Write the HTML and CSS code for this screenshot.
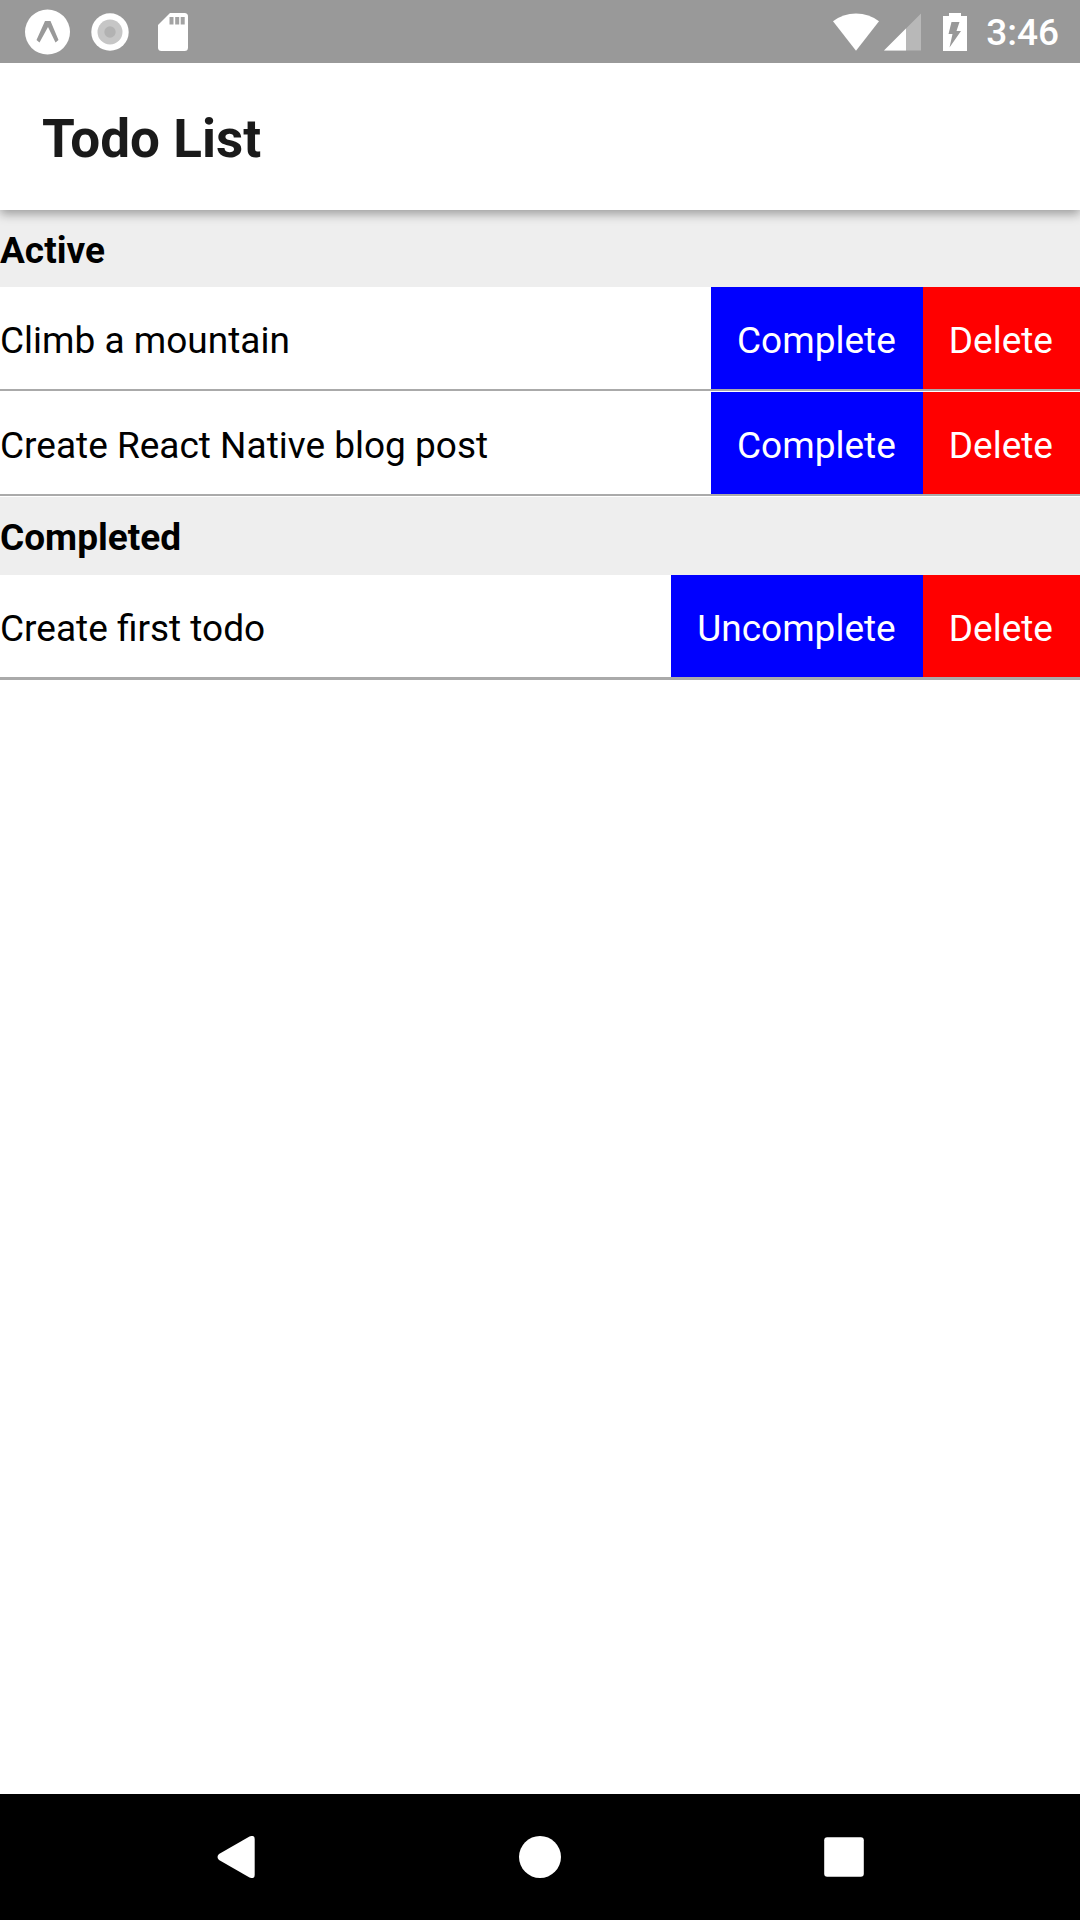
FILE: index.html
```html
<!DOCTYPE html>
<html lang="en">
<head>
<meta charset="utf-8">
<meta name="viewport" content="width=device-width, initial-scale=1">
<title>Todo List</title>
<link rel="stylesheet" href="styles.css">
</head>
<body>
<div class="status-bar">
  <div class="status-left">
    <svg width="46" height="46" viewBox="0 0 46 46" aria-hidden="true">
      <circle cx="22.500" cy="23" r="22.500" fill="#fff"/>
      <path d="M20 12H25.500L33.500 31L30.500 33.500L23 18L14.500 33.500L11.500 31Z" fill="#999"/>
    </svg>
    <svg width="38" height="38" viewBox="0 0 38 38" aria-hidden="true">
      <circle cx="19" cy="19" r="18.700" fill="#fff"/>
      <circle cx="19" cy="19" r="12.500" fill="#c6c6c6"/>
      <circle cx="19" cy="19" r="5.700" fill="#b2b2b2"/>
    </svg>
    <svg width="30" height="38" viewBox="0 0 30 38" aria-hidden="true">
      <path fill="#fff" d="M12 0H26.500Q30 0 30 3.500V34.500Q30 38 26.500 38H3.500Q0 38 0 34.500V12Z"/>
      <path fill="#a3a3a3" d="M11.500 4h4v7.500h-4zM17.200 4h4v7.500h-4zM22.700 4h4v7.500h-4z"/>
    </svg>
  </div>
  <div class="status-right">
    <svg width="46" height="38" viewBox="0 0 46 38" aria-hidden="true">
      <path fill="#fff" d="M0 8.300Q10 .5 23 .5T46 8.300L23 37.700Z"/>
    </svg>
    <svg width="37" height="38" viewBox="0 0 37 38" aria-hidden="true">
      <path fill="#b8b8b8" d="M37 .5V37.500H0Z"/>
      <path fill="#fff" d="M22 15.500V37.500H0Z"/>
    </svg>
    <svg class="battery" width="24" height="38" viewBox="0 0 24 38" aria-hidden="true">
      <path fill="#fff" d="M6 0H18V3H24V38H0V3H6Z"/>
      <path fill="#999" d="M8.500 9H16.500L13.500 18H18L6.500 34.500L9.500 21H5.500Z"/>
    </svg>
    <time>3:46</time>
  </div>
</div>
<header class="app-header"><h1>Todo List</h1></header>
<main>
  <section class="group">
    <h2>Active</h2>
    <ul>
      <li><span class="task">Climb a mountain</span><button class="toggle" type="button">Complete</button><button class="delete" type="button">Delete</button></li>
      <li><span class="task">Create React Native blog post</span><button class="toggle" type="button">Complete</button><button class="delete" type="button">Delete</button></li>
    </ul>
  </section>
  <section class="group">
    <h2>Completed</h2>
    <ul>
      <li><span class="task">Create first todo</span><button class="toggle" type="button">Uncomplete</button><button class="delete" type="button">Delete</button></li>
    </ul>
  </section>
</main>
<nav class="nav-bar">
  <button type="button" aria-label="Back">
    <svg width="42" height="42" viewBox="0 0 42 42"><path fill="#fff" d="M34.500 .5Q39.700 -1.500 39.700 3V39Q39.700 43.500 34.500 41.500L4 24Q1 21 4 18Z"/></svg>
  </button>
  <button type="button" aria-label="Home">
    <svg width="42" height="42" viewBox="0 0 42 42"><circle cx="21" cy="21" r="21" fill="#fff"/></svg>
  </button>
  <button type="button" aria-label="Recent apps">
    <svg width="42" height="42" viewBox="0 0 42 42"><rect x="1.200" y="1.200" width="39.600" height="39.600" rx="3" fill="#fff"/></svg>
  </button>
</nav>
</body>
</html>
```
FILE: styles.css
```css
* {
  box-sizing: border-box;
}

body {
  display: flex;
  flex-direction: column;
  min-height: 100vh;
  margin: 0;
  background: #fff;
  color: #000;
  font-family: Roboto, sans-serif;
  font-size: 37px;
  line-height: 50px;
}

h1,
h2,
ul {
  margin: 0;
  padding: 0;
}

svg {
  display: block;
  flex: none;
}

button {
  border: 0;
  color: #fff;
  font: inherit;
}

.status-bar {
  display: flex;
  align-items: center;
  justify-content: space-between;
  height: 63px;
  padding: 0 21px 0 25px;
  background: #999;
  color: #fff;
}

.status-left,
.status-right {
  display: flex;
  align-items: center;
}

.status-left {
  gap: 20px;
}

.status-left svg:last-child {
  margin-left: 9px;
}

.status-right {
  gap: 5px;
}

.battery {
  margin: 0 14px 0 17px;
}

.status-right time {
  padding-top: 3px;
  font-weight: 500;
}

.app-header {
  z-index: 1;
  padding: 45px 42px 39px;
  background: #fff;
  box-shadow: 0 4px 10px rgba(0, 0, 0, 0.35);
  clip-path: inset(0 0 -20px 0);
}

h1 {
  color: #1a1a1a;
  font-size: 53px;
  line-height: 63px;
}

h2 {
  padding: 15px 0 11px;
  background: #eee;
  font-size: 37px;
  line-height: 51px;
}

.group + .group h2 {
  padding-bottom: 12px;
}

main {
  flex: 1;
}

ul {
  list-style: none;
}

li {
  display: flex;
  margin-bottom: 1px;
  border-bottom: 2px solid #aaa;
}

.group:last-child li:last-child {
  border-bottom-width: 3px;
}

.task {
  flex: 1;
  padding: 29px 0 23px;
}

.toggle,
.delete {
  padding: 29px 26px 23px;
}

.delete {
  padding-right: 27px;
}

.toggle {
  padding-right: 27px;
  background: #00f;
}

.delete {
  background: #f00;
}

.nav-bar {
  display: flex;
  padding: 0 84px;
  background: #000;
}

.nav-bar button {
  display: flex;
  flex: 1;
  justify-content: center;
  padding: 42px 0;
  background: none;
}
```
